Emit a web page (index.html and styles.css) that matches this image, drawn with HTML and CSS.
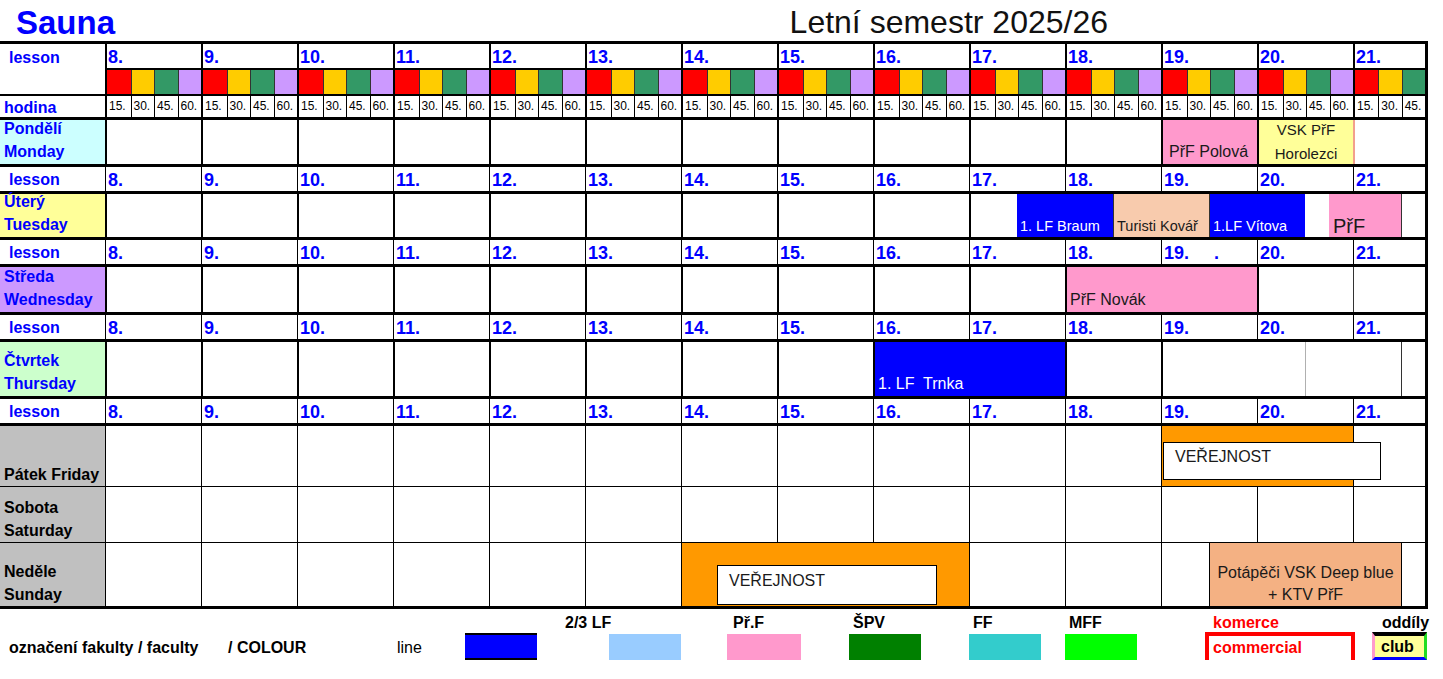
FILE: index.html
```html
<!DOCTYPE html>
<html lang="cs">
<head>
<meta charset="utf-8">
<title>Sauna – Letní semestr 2025/26</title>
<link rel="stylesheet" href="styles.css">
</head>
<body>
<div class="page">
  <div class="title">
    <span class="sauna">Sauna</span>
    <span class="semester">Letní semestr 2025/26</span>
  </div>

  <div class="hdr">
    <div class="hl">lesson</div>
    <div class="hn">8.</div><div class="hn">9.</div><div class="hn">10.</div><div class="hn">11.</div><div class="hn">12.</div><div class="hn">13.</div><div class="hn">14.</div><div class="hn">15.</div><div class="hn">16.</div><div class="hn">17.</div><div class="hn">18.</div><div class="hn">19.</div><div class="hn">20.</div><div class="hn s3">21.</div>

    <div class="cg"><i class="r"></i><i class="y"></i><i class="g"></i><i class="v"></i></div>
    <div class="cg"><i class="r"></i><i class="y"></i><i class="g"></i><i class="v"></i></div>
    <div class="cg"><i class="r"></i><i class="y"></i><i class="g"></i><i class="v"></i></div>
    <div class="cg"><i class="r"></i><i class="y"></i><i class="g"></i><i class="v"></i></div>
    <div class="cg"><i class="r"></i><i class="y"></i><i class="g"></i><i class="v"></i></div>
    <div class="cg"><i class="r"></i><i class="y"></i><i class="g"></i><i class="v"></i></div>
    <div class="cg"><i class="r"></i><i class="y"></i><i class="g"></i><i class="v"></i></div>
    <div class="cg"><i class="r"></i><i class="y"></i><i class="g"></i><i class="v"></i></div>
    <div class="cg"><i class="r"></i><i class="y"></i><i class="g"></i><i class="v"></i></div>
    <div class="cg"><i class="r"></i><i class="y"></i><i class="g"></i><i class="v"></i></div>
    <div class="cg"><i class="r"></i><i class="y"></i><i class="g"></i><i class="v"></i></div>
    <div class="cg"><i class="r"></i><i class="y"></i><i class="g"></i><i class="v"></i></div>
    <div class="cg"><i class="r"></i><i class="y"></i><i class="g"></i><i class="v"></i></div>
    <div class="cg s3"><i class="r"></i><i class="y"></i><i class="g"></i></div>

    <div class="hod">hodina</div>
    <div class="qg"><span>15.</span><span>30.</span><span>45.</span><span>60.</span></div>
    <div class="qg"><span>15.</span><span>30.</span><span>45.</span><span>60.</span></div>
    <div class="qg"><span>15.</span><span>30.</span><span>45.</span><span>60.</span></div>
    <div class="qg"><span>15.</span><span>30.</span><span>45.</span><span>60.</span></div>
    <div class="qg"><span>15.</span><span>30.</span><span>45.</span><span>60.</span></div>
    <div class="qg"><span>15.</span><span>30.</span><span>45.</span><span>60.</span></div>
    <div class="qg"><span>15.</span><span>30.</span><span>45.</span><span>60.</span></div>
    <div class="qg"><span>15.</span><span>30.</span><span>45.</span><span>60.</span></div>
    <div class="qg"><span>15.</span><span>30.</span><span>45.</span><span>60.</span></div>
    <div class="qg"><span>15.</span><span>30.</span><span>45.</span><span>60.</span></div>
    <div class="qg"><span>15.</span><span>30.</span><span>45.</span><span>60.</span></div>
    <div class="qg"><span>15.</span><span>30.</span><span>45.</span><span>60.</span></div>
    <div class="qg"><span>15.</span><span>30.</span><span>45.</span><span>60.</span></div>
    <div class="qg s3"><span>15.</span><span>30.</span><span>45.</span></div>
  </div>

  <!-- Monday -->
  <div class="grid day mon">
    <div class="lbl">Pondělí<br>Monday</div>
    <div class="c c4"></div><div class="c c4"></div><div class="c c4"></div><div class="c c4"></div><div class="c c4"></div><div class="c c4"></div><div class="c c4"></div><div class="c c4"></div><div class="c c4"></div><div class="c c4"></div><div class="c c4"></div>
    <div class="c c4 ev pink pol">PřF Polová</div>
    <div class="c c4 ev yel mid">VSK PřF<br>Horolezci</div>
    <div class="c c3 redl"></div>
  </div>
  <div class="grid les">
    <div class="ll">lesson</div>
    <div class="n">8.</div><div class="n">9.</div><div class="n">10.</div><div class="n">11.</div><div class="n">12.</div><div class="n">13.</div><div class="n">14.</div><div class="n">15.</div><div class="n">16.</div><div class="n">17.</div><div class="n">18.</div><div class="n">19.</div><div class="n">20.</div><div class="n s3">21.</div>
  </div>

  <!-- Tuesday -->
  <div class="grid day tue">
    <div class="lbl">Úterý<br>Tuesday</div>
    <div class="c c4"></div><div class="c c4"></div><div class="c c4"></div><div class="c c4"></div><div class="c c4"></div><div class="c c4"></div><div class="c c4"></div><div class="c c4"></div><div class="c c4"></div>
    <div class="c c2"></div>
    <div class="c c4 ev blue nb sm">1. LF Braum</div>
    <div class="c c4 ev peach thinl sm">Turisti Kovář</div>
    <div class="c c4 ev blue thinl sm">1.LF Vítova</div>
    <div class="c c1 nb"></div>
    <div class="c c3 ev pink nb big">PřF</div>
    <div class="c c1 thinl"></div>
  </div>
  <div class="grid les">
    <div class="ll">lesson</div>
    <div class="n">8.</div><div class="n">9.</div><div class="n">10.</div><div class="n">11.</div><div class="n">12.</div><div class="n">13.</div><div class="n">14.</div><div class="n">15.</div><div class="n">16.</div><div class="n">17.</div><div class="n">18.</div><div class="n">19.<span class="dot">.</span></div><div class="n">20.</div><div class="n s3">21.</div>
  </div>

  <!-- Wednesday -->
  <div class="grid day wed">
    <div class="lbl">Středa<br>Wednesday</div>
    <div class="c c4"></div><div class="c c4"></div><div class="c c4"></div><div class="c c4"></div><div class="c c4"></div><div class="c c4"></div><div class="c c4"></div><div class="c c4"></div><div class="c c4"></div><div class="c c4"></div>
    <div class="c c8 ev pink">PřF Novák</div>
    <div class="c c4"></div>
    <div class="c c3 thinl"></div>
  </div>
  <div class="grid les">
    <div class="ll">lesson</div>
    <div class="n">8.</div><div class="n">9.</div><div class="n">10.</div><div class="n">11.</div><div class="n">12.</div><div class="n">13.</div><div class="n">14.</div><div class="n">15.</div><div class="n">16.</div><div class="n">17.</div><div class="n">18.</div><div class="n">19.</div><div class="n">20.</div><div class="n s3">21.</div>
  </div>

  <!-- Thursday -->
  <div class="grid day thu">
    <div class="lbl">Čtvrtek<br>Thursday</div>
    <div class="c c4"></div><div class="c c4"></div><div class="c c4"></div><div class="c c4"></div><div class="c c4"></div><div class="c c4"></div><div class="c c4"></div><div class="c c4"></div>
    <div class="c c8 ev blue">1. LF&nbsp; Trnka</div>
    <div class="c c4"></div>
    <div class="c c6"></div>
    <div class="c c4 grayl"></div>
    <div class="c c1 thinl"></div>
  </div>
  <div class="grid les">
    <div class="ll">lesson</div>
    <div class="n">8.</div><div class="n">9.</div><div class="n">10.</div><div class="n">11.</div><div class="n">12.</div><div class="n">13.</div><div class="n">14.</div><div class="n">15.</div><div class="n">16.</div><div class="n">17.</div><div class="n">18.</div><div class="n">19.</div><div class="n">20.</div><div class="n s3">21.</div>
  </div>

  <!-- Friday -->
  <div class="grid day wk fri">
    <div class="lbl">Pátek Friday</div>
    <div class="c c4"></div><div class="c c4"></div><div class="c c4"></div><div class="c c4"></div><div class="c c4"></div><div class="c c4"></div><div class="c c4"></div><div class="c c4"></div><div class="c c4"></div><div class="c c4"></div><div class="c c4"></div>
    <div class="c c8 orange"><div class="pub pub-fri">VEŘEJNOST</div></div>
    <div class="c c3"></div>
  </div>

  <!-- Saturday -->
  <div class="grid day wk sat">
    <div class="lbl">Sobota<br>Saturday</div>
    <div class="c c4"></div><div class="c c4"></div><div class="c c4"></div><div class="c c4"></div><div class="c c4"></div><div class="c c4"></div><div class="c c4"></div><div class="c c4"></div><div class="c c4"></div><div class="c c4"></div><div class="c c4"></div><div class="c c4"></div><div class="c c4"></div><div class="c c3"></div>
  </div>

  <!-- Sunday -->
  <div class="grid day wk sun">
    <div class="lbl">Neděle<br>Sunday</div>
    <div class="c c4"></div><div class="c c4"></div><div class="c c4"></div><div class="c c4"></div><div class="c c4"></div><div class="c c4"></div>
    <div class="c c12 orange"><div class="pub pub-sun">VEŘEJNOST</div></div>
    <div class="c c4"></div>
    <div class="c c4"></div>
    <div class="c c2"></div>
    <div class="c c8 ev salmon mid">Potápěči VSK Deep blue<br>+ KTV PřF</div>
    <div class="c c1"></div>
  </div>

  <!-- Legend -->
  <div class="legend">
    <div class="lg-t">označení fakulty / faculty</div>
    <div class="lg-c">/ COLOUR</div>
    <div class="lg-line">line</div>
    <div class="sw sw-line"></div>
    <div class="lb lb-lf">2/3 LF</div>
    <div class="sw sw-lf"></div>
    <div class="lb lb-prf">Př.F</div>
    <div class="sw sw-prf"></div>
    <div class="lb lb-spv">ŠPV</div>
    <div class="sw sw-spv"></div>
    <div class="lb lb-ff">FF</div>
    <div class="sw sw-ff"></div>
    <div class="lb lb-mff">MFF</div>
    <div class="sw sw-mff"></div>
    <div class="lb lb-kom">komerce</div>
    <div class="comm">commercial</div>
    <div class="lb lb-odd">oddíly</div>
    <div class="club">club</div>
  </div>
</div>
</body>
</html>
```

FILE: styles.css
```css
* { box-sizing: border-box; margin: 0; padding: 0; }

body {
  background: #fff;
  font-family: "Liberation Sans", Arial, Helvetica, sans-serif;
  color: #000;
}

.page {
  width: 1443px;
  height: 679px;
  overflow: hidden;
}

/* ---------- title ---------- */
.title {
  height: 41px;
  display: flex;
  align-items: flex-start;
  white-space: nowrap;
}
.sauna {
  font-size: 33px;
  font-weight: 700;
  color: #0000ff;
  line-height: 45px;
  padding-left: 16px;
}
.semester {
  font-size: 32px;
  line-height: 44px;
  color: #111;
  margin-left: auto;
  margin-right: 335px;
}

/* ---------- shared grid ---------- */
.hdr, .grid {
  display: grid;
  grid-template-columns: 105px repeat(55, 24px);
  width: 1428px;
  border-right: 3px solid #000;
}

/* ---------- header ---------- */
.hdr {
  border-top: 3px solid #000;
  grid-template-rows: 24px 26px 23px;
}
.hl {
  grid-row: 1 / 3;
  grid-column: 1;
  color: #0000ff;
  font-weight: 700;
  font-size: 16px;
  line-height: 20px;
  padding: 4px 0 0 9px;
}
.hn {
  grid-column: span 4;
  border-left: 2px solid #000;
  color: #0000ff;
  font-weight: 700;
  font-size: 18px;
  line-height: 24px;
  padding: 1px 0 0 1px;
}
.cg {
  grid-column: span 4;
  display: grid;
  grid-template-columns: repeat(4, 1fr);
  border-left: 2px solid #000;
  border-top: 2px solid #000;
}
.cg i { border-left: 1px solid #333; }
.cg i:first-child { border-left: 0; }
.cg.s3 { grid-template-columns: repeat(3, 1fr); }
.r { background: #ff0000; }
.y { background: #ffcc00; }
.g { background: #339966; }
.v { background: #cc99ff; }

.hod {
  grid-column: 1;
  border-top: 2px solid #000;
  color: #0000ff;
  font-weight: 700;
  font-size: 16px;
  line-height: 21px;
  padding: 1px 0 0 4px;
}
.qg {
  grid-column: span 4;
  display: grid;
  grid-template-columns: repeat(4, 1fr);
  border-left: 2px solid #000;
  border-top: 2px solid #000;
}
.qg.s3 { grid-template-columns: repeat(3, 1fr); }
.qg span {
  font-size: 12px;
  line-height: 21px;
  padding-left: 2px;
  border-left: 1px solid #000;
  white-space: nowrap;
  overflow: hidden;
}
.qg span:first-child { border-left: 0; }

/* ---------- lesson rows ---------- */
.les {
  border-top: 3px solid #000;
  grid-template-rows: 24px;
}
.ll {
  color: #0000ff;
  font-weight: 700;
  font-size: 16px;
  line-height: 24px;
  padding: 1px 0 0 9px;
}
.n {
  grid-column: span 4;
  border-left: 1px solid #000;
  color: #0000ff;
  font-weight: 700;
  font-size: 18px;
  line-height: 24px;
  padding: 1px 0 0 2px;
  white-space: nowrap;
}
.dot { margin-left: 25px; }

/* ---------- day rows ---------- */
.day { border-top: 3px solid #000; }
.mon { grid-template-rows: 44px; }
.tue { grid-template-rows: 43px; }
.wed { grid-template-rows: 45px; }
.thu { grid-template-rows: 54px; }
.fri { grid-template-rows: 60px; }
.sat { grid-template-rows: 55px; border-top-width: 1px; }
.sun { grid-template-rows: 63px; border-top-width: 1px; border-bottom: 3px solid #000; }

.lbl {
  display: flex;
  flex-direction: column;
  justify-content: flex-end;
  font-size: 16px;
  font-weight: 700;
  line-height: 23px;
  color: #0000ff;
  padding: 0 0 1px 4px;
  white-space: nowrap;
}
.mon .lbl { background: #ccffff; }
.tue .lbl { background: #ffff99; }
.wed .lbl { background: #cc99ff; }
.thu .lbl { background: #ccffcc; }
.wk .lbl { background: #c0c0c0; color: #000; padding-bottom: 0; }

.c { border-left: 2px solid #000; }
.wk .c { border-left-width: 1px; }
.c1 { grid-column: span 1; }
.c2 { grid-column: span 2; }
.c3 { grid-column: span 3; }
.c4 { grid-column: span 4; }
.c6 { grid-column: span 6; }
.c8 { grid-column: span 8; }
.c12 { grid-column: span 12; }
.s3 { grid-column: span 3; }

.nb { border-left: 0; }
.thinl { border-left-width: 1px; border-left-color: #333; }
.grayl { border-left-width: 1px; border-left-color: #b0b0b0; }
.redl { border-left: 2px solid #f2a08c; }

.ev {
  display: flex;
  flex-direction: column;
  justify-content: flex-end;
  font-size: 16px;
  line-height: 22px;
  color: #1a1a1a;
  padding: 0 0 1px 3px;
  white-space: nowrap;
  overflow: hidden;
}
.ev.pol { padding-left: 6px; }
.ev.mid {
  justify-content: center;
  align-items: center;
  text-align: center;
  padding: 0;
}
.ev.sm { font-size: 14.5px; padding-bottom: 0; }
.ev.big { font-size: 20px; padding-left: 4px; padding-bottom: 0; }
.yel.mid { font-size: 15px; line-height: 24px; }
.salmon.mid { justify-content: flex-end; line-height: 22px; padding-bottom: 0; }

.pink { background: #ff99cc; }
.yel { background: #ffff99; }
.blue { background: #0000ff; color: #fff; }
.peach { background: #f8cbad; }
.salmon { background: #f4b183; }
.orange { background: #ff9900; position: relative; }

.pub {
  position: absolute;
  background: #fff;
  border: 1px solid #000;
  font-size: 16px;
  line-height: 16px;
  color: #1a1a1a;
  white-space: nowrap;
  z-index: 2;
}
.pub-fri { left: 1px; top: 16px; width: 218px; height: 38px; padding: 6px 0 0 11px; }
.pub-sun { left: 35px; top: 22px; width: 220px; height: 40px; padding: 7px 0 0 11px; }

/* ---------- legend ---------- */
.legend {
  display: grid;
  grid-template-columns: 105px repeat(55, 24px);
  grid-template-rows: 25px 26px;
  font-size: 16px;
  font-weight: 700;
  white-space: nowrap;
}
.lb { grid-row: 1; line-height: 25px; padding: 1px 0 0 4px; }
.lg-t { grid-row: 2; grid-column: 1 / span 6; line-height: 26px; padding: 1px 0 0 9px; }
.lg-c { grid-row: 2; grid-column: 7 / span 5; line-height: 26px; padding: 1px 0 0 3px; }
.lg-line { grid-row: 2; grid-column: 14 / span 3; line-height: 26px; padding: 1px 0 0 4px; font-weight: 400; }

.sw { grid-row: 2; }
.sw-line { grid-column: 17 / span 3; background: #0000ff; border-top: 2px solid #000; border-bottom: 2px solid #000; margin-top: -1px; }
.lb-lf { grid-column: 21 / span 3; }
.sw-lf { grid-column: 23 / span 3; background: #99ccff; }
.lb-prf { grid-column: 28 / span 3; }
.sw-prf { grid-column: 28 / span 3; background: #ff99cc; margin-left: -2px; }
.lb-spv { grid-column: 33 / span 3; }
.sw-spv { grid-column: 33 / span 3; background: #008000; }
.lb-ff { grid-column: 38 / span 3; }
.sw-ff { grid-column: 38 / span 3; background: #33cccc; }
.lb-mff { grid-column: 42 / span 3; }
.sw-mff { grid-column: 42 / span 3; background: #00ff00; }

.lb-kom { grid-column: 48 / span 5; color: #ff0000; }
.comm {
  grid-row: 2;
  grid-column: 48 / span 6;
  margin: -2px -2px 0 -4px;
  height: 28px;
  border: 4px solid #ff0000;
  border-bottom: 0;
  color: #ff0000;
  line-height: 22px;
  padding: 1px 0 0 4px;
}
.lb-odd { grid-column: 55 / span 2; padding-left: 5px; }
.club {
  grid-row: 2;
  grid-column: 55 / span 2;
  margin: -2px -2px 0 -5px;
  height: 28px;
  background: #ffff99;
  border-top: 4px solid #000;
  border-left: 3px solid #ff99cc;
  border-right: 3px solid #22dd22;
  border-bottom: 3px solid #0000ff;
  line-height: 21px;
  padding-left: 6px;
}
```
